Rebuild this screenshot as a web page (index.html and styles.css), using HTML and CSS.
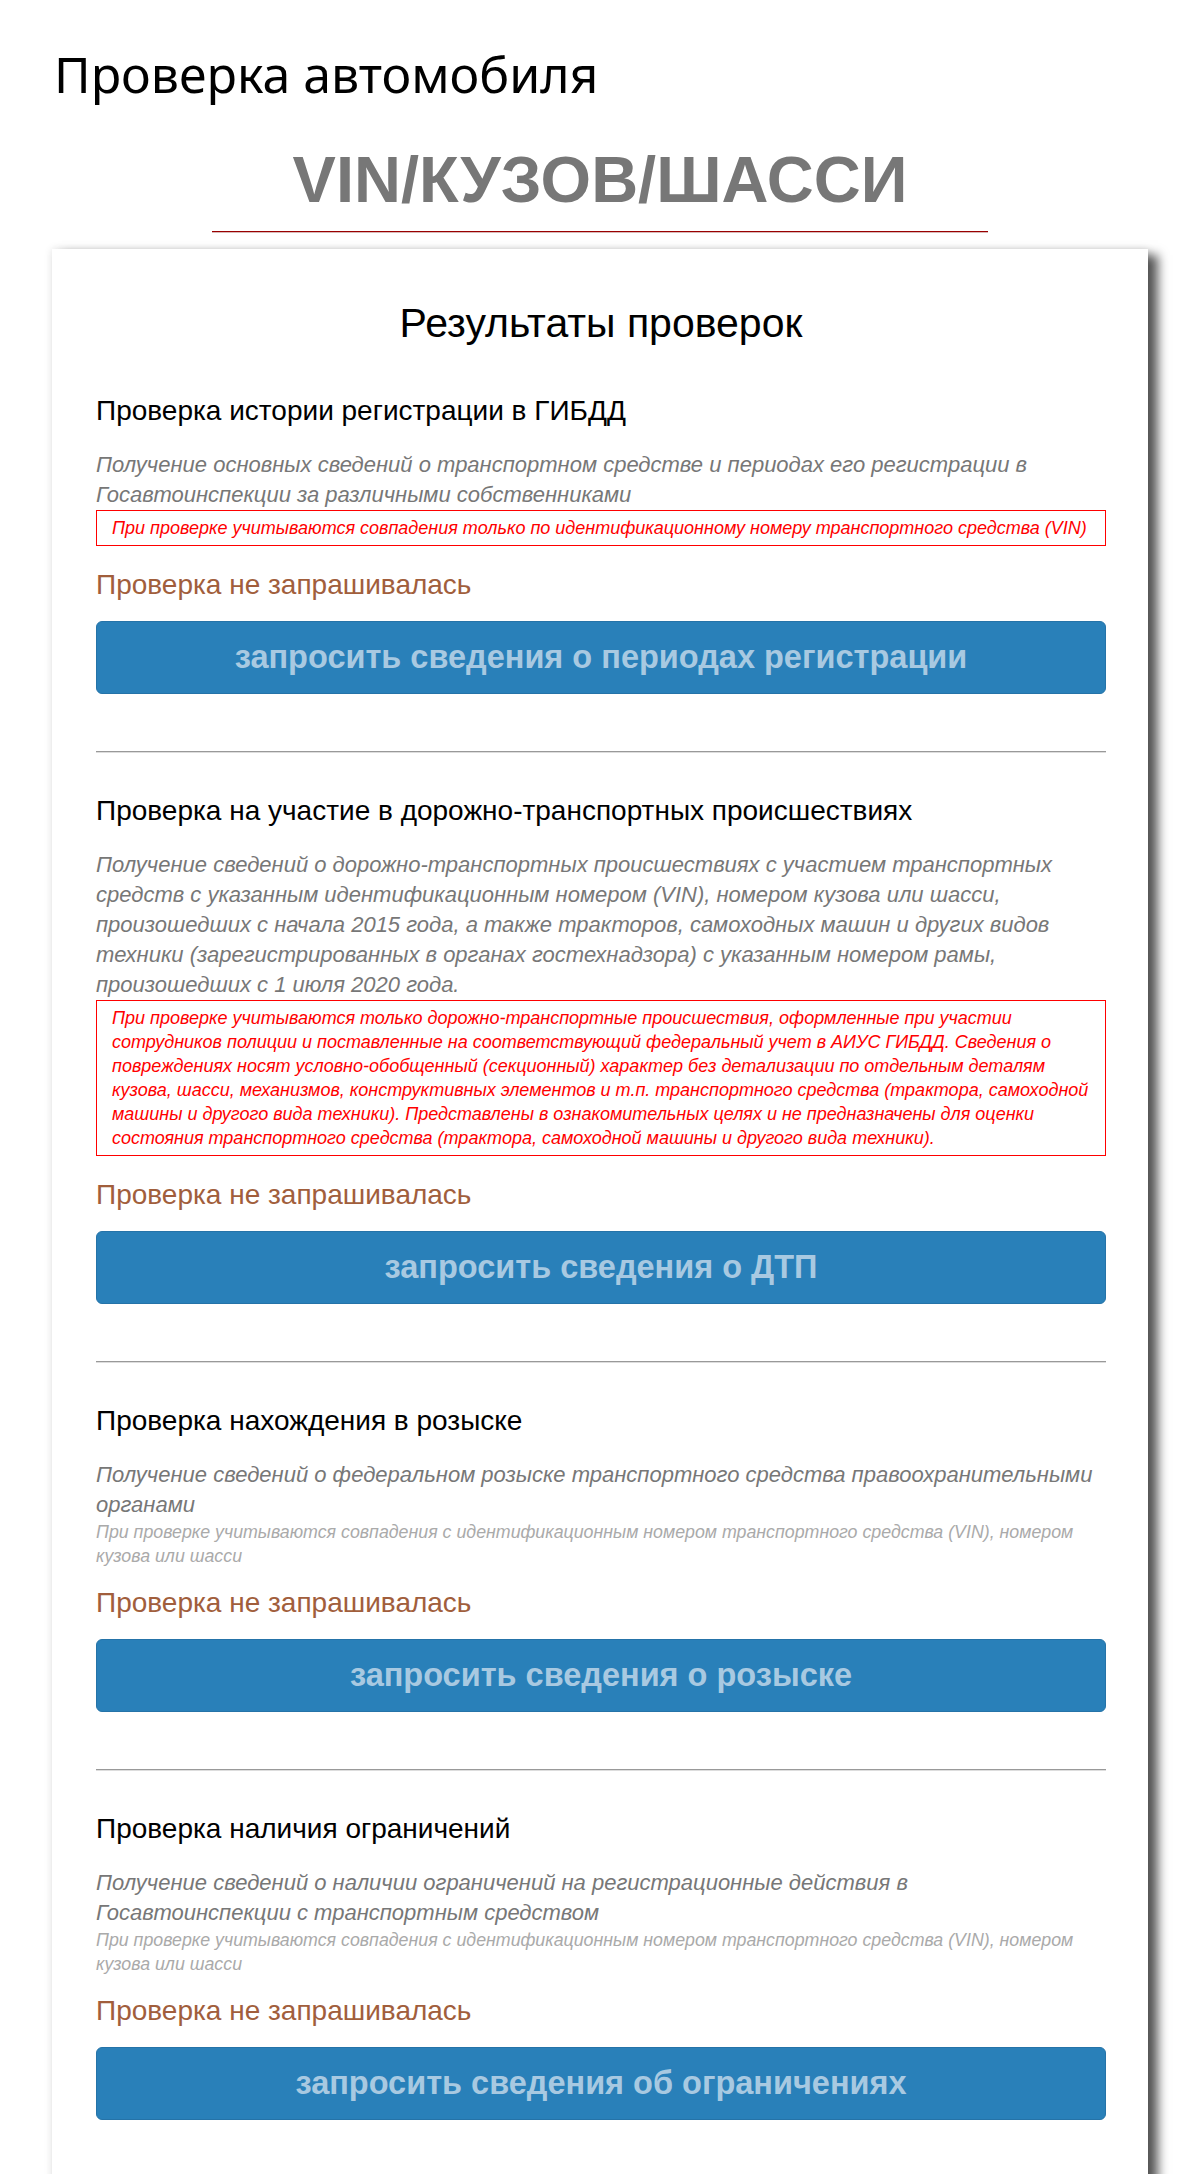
FILE: index.html
```html
<!DOCTYPE html>
<html lang="ru">
<head>
    <meta charset="UTF-8">
    <meta name="viewport" content="width=device-width, initial-scale=1.0">
    <title>Проверка автомобиля</title>
    <link rel="stylesheet" href="styles.css">
</head>
<body>
    <h1 class="page-title">Проверка автомобиля</h1>
    <h2 class="search-type">VIN/КУЗОВ/ШАССИ</h2>

    <div class="card">
        <h2 class="card-title">Результаты проверок</h2>

        <div class="check">
            <h3 class="check-title">Проверка истории регистрации в ГИБДД</h3>
            <p class="check-desc">Получение основных сведений о транспортном средстве и периодах его регистрации в Госавтоинспекции за различными собственниками</p>
            <p class="check-warning">При проверке учитываются совпадения только по идентификационному номеру транспортного средства (VIN)</p>
            <p class="check-status">Проверка не запрашивалась</p>
            <button class="check-btn">запросить сведения о периодах регистрации</button>
        </div>

        <hr class="divider">

        <div class="check">
            <h3 class="check-title">Проверка на участие в дорожно-транспортных происшествиях</h3>
            <p class="check-desc">Получение сведений о дорожно-транспортных происшествиях с участием транспортных средств с указанным идентификационным номером (VIN), номером кузова или шасси, произошедших с начала 2015 года, а также тракторов, самоходных машин и других видов техники (зарегистрированных в органах гостехнадзора) с указанным номером рамы, произошедших с 1 июля 2020 года.</p>
            <p class="check-warning">При проверке учитываются только дорожно-транспортные происшествия, оформленные при участии сотрудников полиции и поставленные на соответствующий федеральный учет в АИУС ГИБДД. Сведения о повреждениях носят условно-обобщенный (секционный) характер без детализации по отдельным деталям кузова, шасси, механизмов, конструктивных элементов и т.п. транспортного средства (трактора, самоходной машины и другого вида техники). Представлены в ознакомительных целях и не предназначены для оценки состояния транспортного средства (трактора, самоходной машины и другого вида техники).</p>
            <p class="check-status">Проверка не запрашивалась</p>
            <button class="check-btn">запросить сведения о ДТП</button>
        </div>

        <hr class="divider">

        <div class="check">
            <h3 class="check-title">Проверка нахождения в розыске</h3>
            <p class="check-desc">Получение сведений о федеральном розыске транспортного средства правоохранительными органами</p>
            <p class="check-note">При проверке учитываются совпадения с идентификационным номером транспортного средства (VIN), номером кузова или шасси</p>
            <p class="check-status">Проверка не запрашивалась</p>
            <button class="check-btn">запросить сведения о розыске</button>
        </div>

        <hr class="divider">

        <div class="check">
            <h3 class="check-title">Проверка наличия ограничений</h3>
            <p class="check-desc">Получение сведений о наличии ограничений на регистрационные действия в Госавтоинспекции с транспортным средством</p>
            <p class="check-note">При проверке учитываются совпадения с идентификационным номером транспортного средства (VIN), номером кузова или шасси</p>
            <p class="check-status">Проверка не запрашивалась</p>
            <button class="check-btn">запросить сведения об ограничениях</button>
        </div>
    </div>
</body>
</html>
```

FILE: styles.css
```css
* {
    box-sizing: border-box;
    margin: 0;
    padding: 0;
}

body {
    background-color: #fff;
    color: #000;
    font-family: 'Liberation Sans', Arial, sans-serif;
}

.page-title {
    font-family: 'Noto Sans', sans-serif;
    font-weight: normal;
    font-size: 50px;
    line-height: 60px;
    margin: 44px 0 0 54px;
}

.search-type {
    width: 776px;
    margin: 36px auto 0;
    padding-bottom: 11px;
    text-align: center;
    font-size: 65px;
    line-height: 80px;
    font-weight: bold;
    color: #777;
    border-bottom: 1px solid #990000;
    box-shadow: 0 1px 0 #d9b8b8;
}

.card {
    width: 1096px;
    margin: 17px auto 0;
    padding: 51px 42px 70px 44px;
    background-color: #fff;
    box-shadow: 0 0 8px rgba(0, 0, 0, 0.12), 10px 6px 10px rgba(0, 0, 0, 0.65);
}

.card-title {
    text-align: center;
    font-size: 41px;
    line-height: 46px;
    font-weight: normal;
    margin-bottom: 50px;
}

.check-title {
    font-size: 28px;
    line-height: 30px;
    font-weight: normal;
    margin-bottom: 24px;
}

.check-desc {
    font-size: 22px;
    line-height: 30px;
    font-style: italic;
    color: #777;
}

.check-warning {
    border: 1px solid #f00;
    padding: 5px 8px 5px 15px;
    font-size: 18px;
    line-height: 24px;
    font-style: italic;
    color: #f00;
}

.check-note {
    font-size: 17.8px;
    line-height: 24px;
    font-style: italic;
    color: #aaa;
}

.check-status {
    margin-top: 24px;
    font-size: 28px;
    line-height: 30px;
    color: #a15e3c;
}

.check-note + .check-status {
    margin-top: 20px;
}

.check-btn {
    display: block;
    width: 100%;
    height: 73px;
    margin-top: 21px;
    border: 1px solid #2573a8;
    border-radius: 6px;
    background-color: #2980b9;
    color: #a8c9e1;
    font-family: 'Liberation Sans', Arial, sans-serif;
    font-size: 32.5px;
    font-weight: bold;
    cursor: pointer;
}

.divider {
    margin: 57px 0 43px;
    border: none;
    border-top: 1px solid #999;
    border-bottom: 1px solid #ddd;
}
```
